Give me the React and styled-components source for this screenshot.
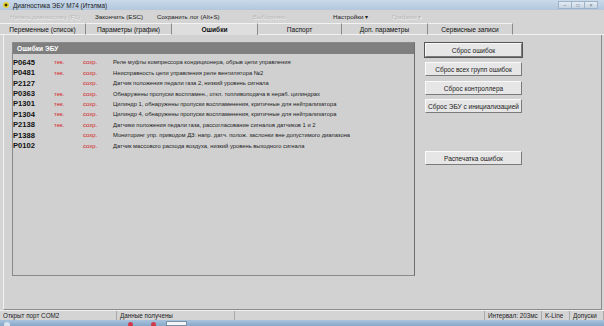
import React from 'react';
import styled, {createGlobalStyle} from 'styled-components';

const Global = createGlobalStyle`
    html, body {
        margin: 0;
        padding: 0;
        background: #d4d4d4;
        font-family: "Liberation Sans", Arial, sans-serif;
    }
`;

const Window = styled.div`
    width: 604px;
    height: 326px;
    display: flex;
    flex-direction: column;
    overflow: hidden;
    background: #d4d4d4;
`;

const TitleBar = styled.div`
    height: 10px;
    display: flex;
    align-items: center;
    padding: 0 6px 0 3px;
    gap: 4px;
    background: linear-gradient(#c9d9ea, #b3c7dc);
    font-size: 6.4px;
    color: #1a1a1a;
`;

const AppIcon = styled.div`
    width: 6px;
    height: 6px;
    border-radius: 50%;
    background: radial-gradient(circle, #3a3200 30%, #e8d230 40%);
`;

const TitleText = styled.span`
    flex: 1;
`;

const Controls = styled.div`
    display: flex;
    align-self: flex-start;
    margin-top: 1px;
`;

const Ctrl = styled.div`
    width: 12px;
    height: 6px;
    border: 1px solid #9fb3c8;
    margin-left: -1px;
    background: linear-gradient(#e4ecf4, #c6d3e1);
    display: flex;
    align-items: center;
    justify-content: center;
    font-size: 5px;
    color: #5a6b7d;
    line-height: 1;
`;

const MenuBar = styled.div`
    height: 12px;
    display: flex;
    align-items: center;
    font-size: 6.2px;
    padding-left: 10px;
`;

const MenuItem = styled.span`
    width: ${p => p.w}px;
    color: ${p => (p.disabled ? '#b8b8b8' : '#1a1a1a')};
    text-shadow: ${p => (p.disabled ? '0.5px 0.5px 0 #f0f0f0' : 'none')};
    white-space: nowrap;
`;

const TabStrip = styled.div`
    height: 12px;
    margin-top: 1px;
    display: flex;
    align-items: stretch;
`;

const Tab = styled.div`
    width: ${p => p.w}px;
    display: flex;
    align-items: center;
    justify-content: center;
    font-size: 6.6px;
    color: #111;
    font-weight: ${p => (p.active ? 'bold' : 'normal')};
    background: ${p => (p.active ? '#dedede' : '#d4d4d4')};
    border-top: 1px solid #f2f2f2;
    border-right: 1px solid #8c8c8c;
    border-bottom: ${p => (p.active ? 'none' : '1px solid #f2f2f2')};
    box-sizing: border-box;
`;

const TabFill = styled.div`
    flex: 1;
    border-bottom: 1px solid #f2f2f2;
`;

const Page = styled.div`
    flex: 1;
    display: flex;
    gap: 10px;
    padding: 7px 0 0 8px;
    margin: 0 2px 0 3px;
    border-left: 1px solid #f2f2f2;
    border-right: 1px solid #8c8c8c;
    border-bottom: 1px solid #8c8c8c;
    background: #d2d2d2;
`;

const Group = styled.div`
    width: 403px;
    height: 234px;
    box-sizing: border-box;
    border: 1px solid #8a8a8a;
    border-right-color: #6e6e6e;
    display: flex;
    flex-direction: column;
    background: #d0d0d0;
`;

const GroupHead = styled.div`
    height: 11px;
    background: #7f7f7f;
    color: #fff;
    font-weight: bold;
    font-size: 6.6px;
    display: flex;
    align-items: center;
    padding-left: 4px;
`;

const Rows = styled.div`
    padding-top: 3px;
    display: flex;
    flex-direction: column;
`;

const Row = styled.div`
    height: 10.45px;
    display: grid;
    grid-template-columns: 41px 29px 30px 1fr;
    align-items: center;
`;

const Code = styled.span`
    font-weight: bold;
    font-size: 7.6px;
    color: #111;
`;

const Flag = styled.span`
    font-size: 6px;
    color: #d42020;
`;

const Desc = styled.span`
    font-size: 5.8px;
    color: #222;
    white-space: nowrap;
`;

const Side = styled.div`
    width: 97px;
    display: flex;
    flex-direction: column;
    padding-top: 1px;
`;

const Button = styled.div`
    height: 14px;
    margin-bottom: ${p => p.mb}px;
    box-sizing: border-box;
    display: flex;
    align-items: center;
    justify-content: center;
    font-size: 6.5px;
    color: #1a1a1a;
    white-space: nowrap;
    background: #e6e6e6;
    border: 1px solid;
    border-color: #fafafa #7a7a7a #7a7a7a #fafafa;
    outline: ${p => (p.focus ? '1px solid #555' : 'none')};
`;

const StatusBar = styled.div`
    height: 9px;
    display: flex;
    font-size: 6.3px;
    color: #222;
    border-top: 1px solid #f0f0f0;
`;

const Cell = styled.div`
    width: ${p => (p.w ? `${p.w}px` : 'auto')};
    flex: ${p => (p.w ? 'none' : '1')};
    padding-left: 3px;
    display: flex;
    align-items: center;
    border-right: 1px solid #a8a8a8;
    box-sizing: border-box;
    white-space: nowrap;
`;

const Taskbar = styled.div`
    height: 6px;
    background: linear-gradient(#a9c3dc, #86a8c8);
    position: relative;
`;

const Dot = styled.div`
    position: absolute;
    left: ${p => p.x}px;
    top: 2px;
    width: ${p => p.s}px;
    height: ${p => p.s}px;
    border-radius: 50%;
    background: ${p => p.c};
`;

const TaskBox = styled.div`
    position: absolute;
    left: 166px;
    top: 1px;
    width: 21px;
    height: 5px;
    background: #f4f4f4;
    border: 1px solid #7892aa;
    box-sizing: border-box;
`;

const errors = [
    ['P0645', true, 'Реле муфты компрессора кондиционера, обрыв цепи управления'],
    ['P0481', true, 'Неисправность цепи управления реле вентилятора №2'],
    ['P2127', false, 'Датчик положения педали газа 2, низкий уровень сигнала'],
    ['P0363', true, 'Обнаружены пропуски воспламен., откл. топливоподача в нераб. цилиндрах'],
    ['P1301', true, 'Цилиндр 1, обнаружены пропуски воспламенения, критичные для нейтрализатора'],
    ['P1304', true, 'Цилиндр 4, обнаружены пропуски воспламенения, критичные для нейтрализатора'],
    ['P2138', true, 'Датчики положения педали газа, рассогласование сигналов датчиков 1 и 2'],
    ['P1388', false, 'Мониторинг упр. приводом ДЗ: напр. датч. полож. заслонки вне допустимого диапазона'],
    ['P0102', false, 'Датчик массового расхода воздуха, низкий уровень выходного сигнала'],
];

const tabs = [
    ['Переменные (список)', 86],
    ['Параметры (график)', 86],
    ['Ошибки', 86, true],
    ['Паспорт', 84],
    ['Доп. параметры', 86],
    ['Сервисные записи', 85],
];

export default function App() {
    return (
        <Window>
            <Global />
            <TitleBar>
                <AppIcon />
                <TitleText>Диагностика ЭБУ М74 (Итэлма)</TitleText>
                <Controls>
                    <Ctrl>–</Ctrl>
                    <Ctrl>□</Ctrl>
                    <Ctrl>×</Ctrl>
                </Controls>
            </TitleBar>
            <MenuBar>
                <MenuItem w={85} disabled>Начать диагностику (F1)</MenuItem>
                <MenuItem w={62}>Закончить (ESC)</MenuItem>
                <MenuItem w={96}>Сохранить лог (Alt+S)</MenuItem>
                <MenuItem w={80} disabled>Выборочно</MenuItem>
                <MenuItem w={59}>Настройки ▾</MenuItem>
                <MenuItem w={40} disabled>Графики ▾</MenuItem>
            </MenuBar>
            <TabStrip>
                {tabs.map(([t, w, a]) => (
                    <Tab key={t} w={w} active={a}>{t}</Tab>
                ))}
                <TabFill />
            </TabStrip>
            <Page>
                <Group>
                    <GroupHead>Ошибки ЭБУ</GroupHead>
                    <Rows>
                        {errors.map(([code, cur, text]) => (
                            <Row key={code}>
                                <Code>{code}</Code>
                                <Flag>{cur ? 'тек.' : ''}</Flag>
                                <Flag>сохр.</Flag>
                                <Desc>{text}</Desc>
                            </Row>
                        ))}
                    </Rows>
                </Group>
                <Side>
                    <Button focus mb={5}>Сброс ошибок</Button>
                    <Button mb={5}>Сброс всех групп ошибок</Button>
                    <Button mb={4}>Сброс контроллера</Button>
                    <Button mb={38}>Сброс ЭБУ с инициализацией</Button>
                    <Button mb={0}>Распечатка ошибок</Button>
                </Side>
            </Page>
            <StatusBar>
                <Cell w={117}>Открыт порт COM2</Cell>
                <Cell w={118}>Данные получены</Cell>
                <Cell />
                <Cell w={57}>Интервал: 203мс</Cell>
                <Cell w={28}>K-Line</Cell>
                <Cell w={34}>Допуски</Cell>
            </StatusBar>
            <Taskbar>
                <Dot x={4} s={6} c="#d8e4ef" />
                <Dot x={128} s={5} c="#d23a4a" />
                <Dot x={151} s={5} c="#d23a4a" />
                <TaskBox />
            </Taskbar>
        </Window>
    );
}
